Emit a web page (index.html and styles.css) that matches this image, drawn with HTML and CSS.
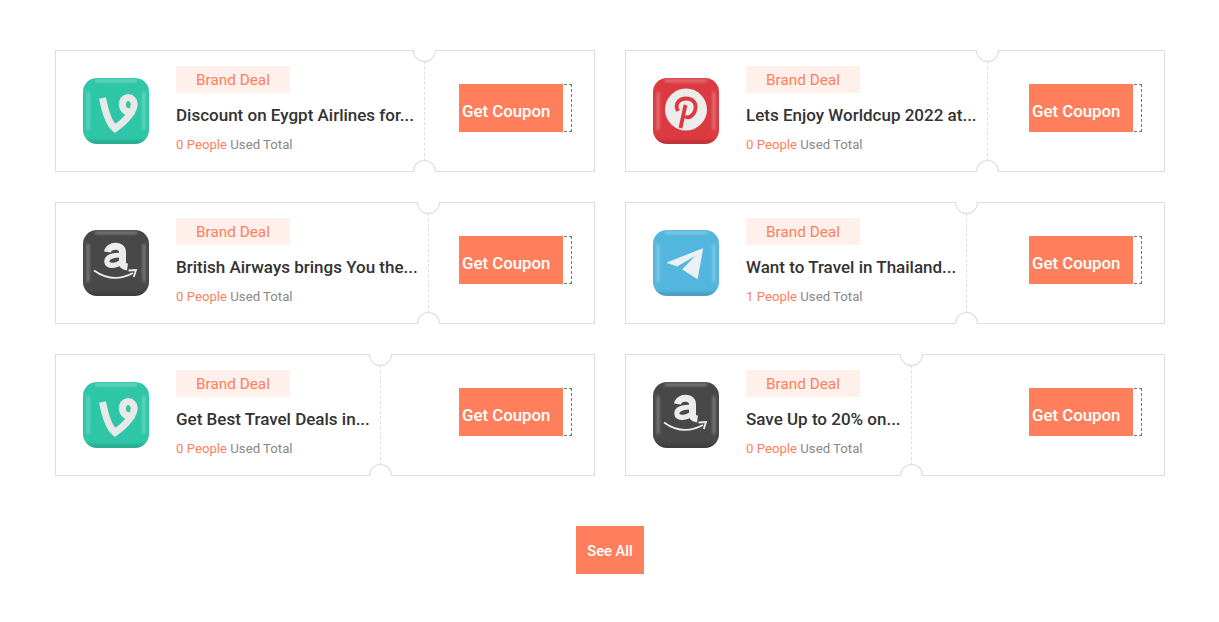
FILE: index.html
```html
<!DOCTYPE html>
<html lang="en">

<head>
    <meta charset="UTF-8">
    <meta name="viewport" content="width=device-width, initial-scale=1.0">
    <title>Coupons</title>
    <link rel="stylesheet" href="styles.css">
</head>

<body>
    <svg class="sprite" aria-hidden="true">
        <defs>
            <filter id="soft" filterUnits="userSpaceOnUse" x="-10" y="-10" width="86" height="86">
                <feGaussianBlur stdDeviation="1.500" />
            </filter>
            <clipPath id="tile"><rect width="66" height="66" rx="14" /></clipPath>
            <g id="shine">
                <g clip-path="url(#tile)">
                    <rect x="-2" y="62" width="70" height="6" fill="#000" opacity=".12" filter="url(#soft)" />
                    <rect x="12" y="1.500" width="42" height="2.500" fill="#fff" opacity=".35" filter="url(#soft)" />
                    <rect x="4" y="14" width="2.200" height="38" fill="#fff" opacity=".38" filter="url(#soft)" />
                    <rect x="59.800" y="14" width="2.200" height="38" fill="#fff" opacity=".38" filter="url(#soft)" />
                </g>
            </g>
            <symbol id="ico-vine" viewBox="0 0 66 66">
                <rect width="66" height="66" rx="14" fill="#2ec6a6" />
                <use href="#shine" />
                <path d="M19.500 20C22 33 26.500 46 32 50.500C38.500 46 47.500 38 50.500 30C53 22.500 47.500 18.500 43.500 19.800C38.500 21.500 37.500 30.500 43.500 33.300C45.800 34.200 48 34 51 33" fill="none" stroke="#e8e8e8" stroke-width="7" />
            </symbol>
            <symbol id="ico-pinterest" viewBox="0 0 66 66">
                <rect width="66" height="66" rx="14" fill="#dc3a41" />
                <use href="#shine" />
                <circle cx="33" cy="31.500" r="21" fill="#ececec" />
                <path d="M25 33C21 25 27 20.500 33 20.500C40 20.500 43.500 25 42.500 30.500C41.500 37 36 41 32 38.500M32.500 27L27.500 50" fill="none" stroke="#dc3a41" stroke-width="3.800" />
            </symbol>
            <symbol id="ico-amazon" viewBox="0 0 66 66">
                <rect width="66" height="66" rx="14" fill="#484848" />
                <use href="#shine" />
                <path d="M24.500 22C25.500 15 39.500 13.500 39.500 22.500L39.500 33.500C39.500 35.500 41 36.500 44.500 37" fill="none" stroke="#ececec" stroke-width="7" />
                <path d="M39.500 25C29 25 23.800 27 23.800 31.500C23.800 37 34 36.500 39.500 31" fill="none" stroke="#ececec" stroke-width="5.200" />
                <path d="M11 40.500Q30 54 50 43M45.500 40.500L53 40L50.800 47" fill="none" stroke="#ececec" stroke-width="1.800" />
            </symbol>
            <symbol id="ico-telegram" viewBox="0 0 66 66">
                <rect width="66" height="66" rx="14" fill="#53b6df" />
                <use href="#shine" />
                <path d="M49.700 18.700L14.300 32.700L24.300 36L43.700 24.700L29.700 39.300L44.300 48.700Z" fill="#eef1f3" stroke="#eef1f3" stroke-width=".8" stroke-linejoin="round" />
            </symbol>
        </defs>
    </svg>

    <div class="wrap">
        <div class="deals">
            <div class="deal">
                <div class="deal-main">
                    <svg class="deal-icon"><use href="#ico-vine" /></svg>
                    <div class="deal-info">
                        <span class="tag">Brand Deal</span>
                        <h3 class="deal-title">Discount on Eygpt Airlines for...</h3>
                        <p class="deal-used"><span>0 People</span> Used Total</p>
                    </div>
                </div>
                <div class="deal-side">
                    <i class="notch notch-top"></i><i class="notch notch-bottom"></i>
                    <a class="coupon" href="#"><span>Get Coupon</span></a>
                </div>
            </div>
            <div class="deal">
                <div class="deal-main">
                    <svg class="deal-icon"><use href="#ico-pinterest" /></svg>
                    <div class="deal-info">
                        <span class="tag">Brand Deal</span>
                        <h3 class="deal-title">Lets Enjoy Worldcup 2022 at...</h3>
                        <p class="deal-used"><span>0 People</span> Used Total</p>
                    </div>
                </div>
                <div class="deal-side">
                    <i class="notch notch-top"></i><i class="notch notch-bottom"></i>
                    <a class="coupon" href="#"><span>Get Coupon</span></a>
                </div>
            </div>
            <div class="deal">
                <div class="deal-main">
                    <svg class="deal-icon"><use href="#ico-amazon" /></svg>
                    <div class="deal-info">
                        <span class="tag">Brand Deal</span>
                        <h3 class="deal-title">British Airways brings You the...</h3>
                        <p class="deal-used"><span>0 People</span> Used Total</p>
                    </div>
                </div>
                <div class="deal-side">
                    <i class="notch notch-top"></i><i class="notch notch-bottom"></i>
                    <a class="coupon" href="#"><span>Get Coupon</span></a>
                </div>
            </div>
            <div class="deal">
                <div class="deal-main">
                    <svg class="deal-icon"><use href="#ico-telegram" /></svg>
                    <div class="deal-info">
                        <span class="tag">Brand Deal</span>
                        <h3 class="deal-title">Want to Travel in Thailand...</h3>
                        <p class="deal-used"><span>1 People</span> Used Total</p>
                    </div>
                </div>
                <div class="deal-side">
                    <i class="notch notch-top"></i><i class="notch notch-bottom"></i>
                    <a class="coupon" href="#"><span>Get Coupon</span></a>
                </div>
            </div>
            <div class="deal">
                <div class="deal-main">
                    <svg class="deal-icon"><use href="#ico-vine" /></svg>
                    <div class="deal-info">
                        <span class="tag">Brand Deal</span>
                        <h3 class="deal-title">Get Best Travel Deals in...</h3>
                        <p class="deal-used"><span>0 People</span> Used Total</p>
                    </div>
                </div>
                <div class="deal-side">
                    <i class="notch notch-top"></i><i class="notch notch-bottom"></i>
                    <a class="coupon" href="#"><span>Get Coupon</span></a>
                </div>
            </div>
            <div class="deal">
                <div class="deal-main">
                    <svg class="deal-icon"><use href="#ico-amazon" /></svg>
                    <div class="deal-info">
                        <span class="tag">Brand Deal</span>
                        <h3 class="deal-title">Save Up to 20% on...</h3>
                        <p class="deal-used"><span>0 People</span> Used Total</p>
                    </div>
                </div>
                <div class="deal-side">
                    <i class="notch notch-top"></i><i class="notch notch-bottom"></i>
                    <a class="coupon" href="#"><span>Get Coupon</span></a>
                </div>
            </div>
        </div>
        <div class="more">
            <a class="see-all" href="#">See All</a>
        </div>
    </div>
</body>

</html>
```

FILE: styles.css
```css
body {
    margin: 0;
    background: #fff;
    font-family: Roboto, Arial, sans-serif;
    color: #333;
}

.sprite {
    position: absolute;
    width: 0;
    height: 0;
}

.wrap {
    width: 1110px;
    padding: 50px 0 48px;
    margin-left: 55px;
}

.deals {
    display: grid;
    grid-template-columns: 540px 540px;
    gap: 30px;
}

.deal {
    display: flex;
    height: 122px;
    box-sizing: border-box;
    border: 1px solid #ddd;
}

.deal-main {
    display: flex;
    align-items: center;
    gap: 27px;
    padding: 0 10px 0 27px;
}

.deal-icon {
    width: 66px;
    height: 66px;
    flex: none;
}

.deal-info {
    padding-bottom: 1px;
}

.tag {
    display: block;
    width: 114px;
    height: 27px;
    line-height: 29px;
    text-align: center;
    background: #fff0ec;
    color: #ff7f5c;
    font-size: 15.300px;
}

.deal-title {
    margin: 9px 0 6px;
    font-size: 17px;
    line-height: 26px;
    font-weight: 500;
    color: #333;
    white-space: nowrap;
}

.deal-used {
    margin: 0;
    font-size: 13.200px;
    line-height: 21px;
    color: #888;
}

.deal-used span {
    color: #ff7f5c;
}

.deal-side {
    position: relative;
    flex: 1;
    display: flex;
    align-items: center;
    justify-content: flex-end;
    padding: 0 22px 6px 0;
    border-left: 1px dashed #ddd;
}

.notch {
    position: absolute;
    left: -12px;
    width: 21px;
    height: 11px;
    background: #fff;
    border: 1px solid #ddd;
}

.notch-top {
    top: -1px;
    border-top: none;
    border-radius: 0 0 12px 12px;
}

.notch-bottom {
    bottom: -1px;
    border-bottom: none;
    border-radius: 12px 12px 0 0;
}

.coupon {
    display: block;
    width: 113px;
    height: 48px;
    box-sizing: border-box;
    border: 1px dashed #777;
    border-left: none;
    text-decoration: none;
}

.coupon span {
    display: block;
    width: 104px;
    height: 48px;
    margin-top: -1px;
    box-sizing: border-box;
    padding-left: 3px;
    background: #ff7f5c;
    color: #fff;
    font-size: 16.800px;
    font-weight: 500;
    line-height: 54px;
    white-space: nowrap;
}

.more {
    display: flex;
    justify-content: center;
    margin-top: 50px;
}

.see-all {
    display: block;
    padding: 0 11.500px;
    line-height: 50px;
    height: 48px;
    background: #ff7f5c;
    color: #fff;
    font-size: 14.700px;
    font-weight: 500;
    text-decoration: none;
}
```
